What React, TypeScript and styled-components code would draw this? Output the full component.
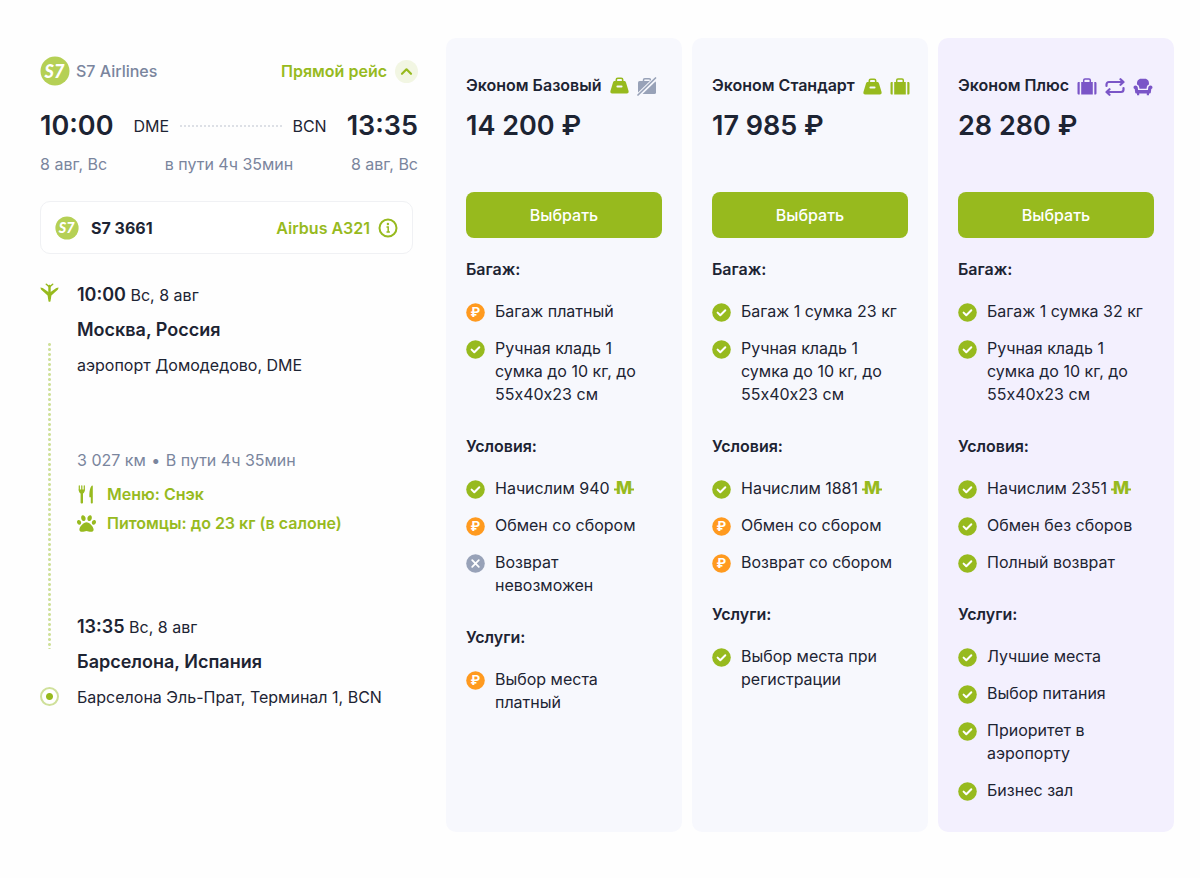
import React from "react";
import styled, { createGlobalStyle } from "styled-components";
import { FaPaw } from "react-icons/fa";

const color = {
  green: "#97ba1e",
  ink: "#1d2433",
  muted: "#7a859d",
  orange: "#ff9a1f",
  violet: "#7a55c7",
  grey: "#98a2b8",
};

const GlobalStyle = createGlobalStyle`
  *, *::before, *::after { box-sizing: border-box; }
  body {
    margin: 0;
    background: #fefefe;
    color: ${color.ink};
    font-family: Inter, "Liberation Sans", sans-serif;
    font-size: 16px;
    line-height: 24px;
  }
  h2, h3, p, ul { margin: 0; padding: 0; font-size: inherit; }
  button { font: inherit; border: 0; cursor: pointer; }
  svg { display: block; flex: none; }
`;

const Page = styled.main`
  display: grid;
  grid-template-columns: 378fr 728fr;
  gap: 28px;
  padding: 38px 26px 46px 40px;
`;

const Flight = styled.section`
  padding-top: 18px;
`;

const Row = styled.div<{ $top?: number }>`
  display: flex;
  align-items: center;
  justify-content: space-between;
  margin-top: ${(p) => p.$top ?? 0}px;
`;

const Airline = styled.div`
  display: flex;
  align-items: center;
  gap: 6px;
  height: 30px;
  color: ${color.muted};
  font-weight: 500;
`;

const TextButton = styled.button`
  display: flex;
  align-items: center;
  gap: 8px;
  padding: 0;
  background: none;
  color: ${color.green};
  font-weight: 600;
`;

const Toggle = styled.span`
  display: grid;
  place-items: center;
  width: 23px;
  height: 23px;
  border-radius: 50%;
  background: #f2f6e3;
`;

const Route = styled.div`
  display: flex;
  align-items: center;
  margin-top: 22px;
`;

const Clock = styled.span`
  font-size: 27px;
  line-height: 36px;
  font-weight: 600;
`;

const Codes = styled.div`
  display: flex;
  flex: 1;
  align-items: center;
  gap: 10px;
  margin: 0 20px;
`;

const Dots = styled.span`
  flex: 1;
  height: 2px;
  background: radial-gradient(circle at center, #dde0e6 0 1px, transparent 1px) 0 0 / 4px 2px;
`;

const Muted = styled.p`
  color: ${color.muted};
`;

const Bullet = styled.span`
  margin: 0 1px;
`;

const FlightCard = styled.div`
  display: flex;
  align-items: center;
  justify-content: space-between;
  height: 53px;
  margin: 25px 5px 29px 0;
  padding: 0 14px;
  border: 1px solid #f0f1f4;
  border-radius: 10px;
  background: #fff;
`;

const FlightNumber = styled.div`
  display: flex;
  align-items: center;
  gap: 12px;
  font-weight: 700;
`;

const Timeline = styled.div`
  display: grid;
  grid-template-columns: 19px 1fr;
  gap: 18px;
`;

const Rail = styled.div`
  display: flex;
  flex-direction: column;
  align-items: center;
  padding-bottom: 3px;
`;

const RailDots = styled.span`
  flex: 1;
  width: 3px;
  margin: 40px 0 38px;
  background: radial-gradient(circle at center, #cfe09a 0 1px, transparent 2px) 0 0 / 3px 5px;
`;

const Ring = styled.span`
  width: 19px;
  height: 19px;
  border: 2px solid #cfe09a;
  border-radius: 50%;
  background: radial-gradient(circle at center, ${color.green} 0 3px, #fff 4px);
`;

const Stop = styled.div`
  display: grid;
  gap: 11px;
`;

const StopTime = styled.p`
  strong { font-size: 18px; font-weight: 600; }
`;

const City = styled.h2`
  font-size: 18px;
  font-weight: 600;
`;

const Details = styled.div`
  display: grid;
  margin: 71px 0 80px;
`;

const Perk = styled.p<{ $top: number }>`
  display: grid;
  grid-template-columns: 19px 1fr;
  gap: 11px;
  align-items: center;
  margin-top: ${(p) => p.$top}px;
  color: ${color.green};
  font-weight: 600;
`;

const Tariffs = styled.section`
  display: grid;
  grid-template-columns: repeat(3, minmax(0, 1fr));
  gap: 10px;
`;

const TariffCard = styled.article<{ $accent?: boolean }>`
  padding: 35px 20px 30px;
  border-radius: 10px;
  background: ${(p) => (p.$accent ? "#f3f0fe" : "#f7f8fd")};
  line-height: 23px;
`;

const TariffHead = styled.div`
  display: flex;
  align-items: center;
  gap: 8px;
  height: 24px;
  white-space: nowrap;
`;

const TariffName = styled.h2`
  font-weight: 600;
`;

const Badges = styled.div`
  display: flex;
  gap: 8px;
  padding-top: 3px;
`;

const Price = styled.p`
  margin: 11px 0 48px;
  font-size: 27px;
  line-height: 36px;
  font-weight: 600;
`;

const SelectButton = styled.button`
  display: block;
  width: 100%;
  height: 46px;
  border-radius: 8px;
  background: ${color.green};
  color: #fff;
  font-weight: 500;
`;

const Group = styled.section<{ $first?: boolean }>`
  margin-top: ${(p) => (p.$first ? 20 : 29)}px;
`;

const GroupTitle = styled.h3`
  margin-bottom: 19px;
  font-weight: 600;
`;

const Features = styled.ul`
  display: grid;
  gap: 14px;
  padding-right: 8px;
  list-style: none;
`;

const Feature = styled.li`
  display: grid;
  grid-template-columns: 19px 1fr;
  gap: 10px;

  > svg { margin-top: 3px; }
`;

const Miles = styled.span`
  display: flex;
  align-items: center;
  gap: 4px;
`;

const S7Logo = ({ size }: { size: number }) => (
  <svg width={size} height={size} viewBox="0 0 30 30" role="img" aria-label="S7">
    <circle cx="15" cy="15" r="14.5" fill="#b5d055" />
    <text x="14.5" y="21.5" textAnchor="middle" fill="#fff" fontFamily="Lato, sans-serif" fontSize="18" fontWeight="900" fontStyle="italic">
      S7
    </text>
  </svg>
);

const PlaneIcon = () => (
  <svg width="19" height="19" viewBox="0 0 19 19">
    <g fill="none" stroke={color.green} strokeLinecap="round" strokeLinejoin="round">
      <path d="M9.500 3v12" strokeWidth="2.400" />
      <path d="M6.300 1.200 9.500 4l3.200-2.800" strokeWidth="1.500" />
    </g>
    <path d="M.4 4.600 2.700 4.900 9.500 9.700 16.300 4.900 18.600 4.600 18 6.400 11.400 12.600 10.500 18.200C10.300 19 8.700 19 8.500 18.200L7.600 12.600 1 6.400z" fill={color.green} />
  </svg>
);

const CutleryIcon = () => (
  <svg width="19" height="19" viewBox="0 0 19 19">
    <path d="M2.300.8V5M4.800.8V5M7.300.8V5" stroke={color.green} strokeWidth="1.200" strokeLinecap="round" />
    <path d="M1.700 4.500h6.200c0 2.200-.8 3.400-1.900 4v9.200c0 1-2.400 1-2.400 0V8.500c-1.100-.6-1.900-1.800-1.900-4z" fill={color.green} />
    <path d="M15.800 1.200v16.500c0 1-2 1-2 0v-5.500h-1.400C12.200 7 13 1.800 15 .5c.5-.2.8.1.8.7z" fill={color.green} />
  </svg>
);

const InfoIcon = () => (
  <svg width="20" height="20" viewBox="0 0 20 20" fill="none" stroke={color.green} strokeWidth="2">
    <circle cx="10" cy="10" r="8.500" />
    <path d="M8.500 9h1.700v5M8.500 14h3.400" strokeWidth="1.500" />
    <circle cx="9.900" cy="6" r="1.200" fill={color.green} stroke="none" />
  </svg>
);

const BagIcon = () => (
  <svg width="19" height="17" viewBox="0 0 19 17">
    <path d="M6.300 5V2.800c0-1 .6-1.600 1.500-1.600h3.400c.9 0 1.500.6 1.500 1.600V5" fill="none" stroke={color.green} strokeWidth="1.600" />
    <path
      fillRule="evenodd"
      fill={color.green}
      d="M5 4h9c1 0 1.600.5 2 1.400l2.500 8.400c.5 1.700-.3 2.700-1.700 2.700H2.200C.8 16.500 0 15.500.5 13.800L3 5.400C3.400 4.500 4 4 5 4zm2.400 4.500c-1.300 0-1.300 2 0 2h4.200c1.300 0 1.300-2 0-2z"
    />
  </svg>
);

const SuitcaseIcon = ({ tone }: { tone: string }) => (
  <svg width="20" height="17" viewBox="0 0 20 17" fill={tone}>
    <path d="M6.700 4.500V2.300c0-.8.5-1.300 1.300-1.300h4c.8 0 1.300.5 1.300 1.300v2.200" fill="none" stroke={tone} strokeWidth="1.500" />
    <path d="M4.200 4h11.600v12.500H4.200z" />
    <path d="M2.700 4v12.500h-.9c-.8 0-1.300-.5-1.300-1.300v-9.900C.5 4.500 1 4 1.800 4zM17.300 4v12.500h.9c.8 0 1.300-.5 1.300-1.300v-9.900c0-.8-.5-1.300-1.300-1.300z" />
  </svg>
);

const NoLuggageIcon = () => (
  <svg width="20" height="19" viewBox="0 0 20 19">
    <path d="M6.500 4.500V3c0-.8.5-1.300 1.300-1.300h4.400c.8 0 1.300.5 1.300 1.300v1.500" fill="none" stroke={color.grey} strokeWidth="1.500" />
    <rect x="1" y="4" width="18" height="13" rx="1.600" fill={color.grey} />
    <path d="M1 18.500 19 1" stroke="#f7f8fd" strokeWidth="4.200" />
    <path d="M1 18 18.500 1" stroke={color.grey} strokeWidth="1.700" strokeLinecap="round" />
  </svg>
);

const ExchangeIcon = () => (
  <svg width="20" height="18" viewBox="0 0 20 18" fill="none" stroke={color.violet} strokeWidth="2.200" strokeLinecap="round" strokeLinejoin="round">
    <path d="M1.500 8V6.500c0-1.500 1-2.500 2.500-2.500h14M15.500 1.200 18.500 4l-3 2.800" />
    <path d="M18.500 10v1.500c0 1.500-1 2.500-2.500 2.500H2M4.500 11.200 1.500 14l3 2.800" />
  </svg>
);

const SeatIcon = () => (
  <svg width="20" height="18" viewBox="0 0 20 18" fill={color.violet}>
    <path d="M4 6.400C3.700 3 5.500.8 8 .8h4c2.500 0 4.300 2.200 4 5.600-1.400.4-2 1.300-2.200 2.800l-.3 1.500h-7l-.3-1.500C6 7.700 5.400 6.800 4 6.400z" />
    <path d="M.5 9.300c0-1.100.8-1.900 1.900-1.900 1.300 0 2.100.8 2.300 1.900l.4 2.800h9.800l.4-2.800c.2-1.100 1-1.900 2.300-1.900 1.100 0 1.900.8 1.900 1.900 0 .9-.5 1.500-1.200 1.800l-.5 3.300c-.1.700-.7 1.200-1.400 1.200H16v1.600h-2.200v-1.600H6.200v1.600H4v-1.600h-.4c-.7 0-1.300-.5-1.400-1.200l-.5-3.300C1 10.800.5 10.200.5 9.300z" />
  </svg>
);

const MileIcon = () => (
  <svg width="20" height="23" viewBox="0 0 20 23" role="img" aria-label="миль">
    <path d="M0 12.500h4M16 12.500h4" stroke={color.green} strokeWidth="2.200" />
    <text x="10" y="17" textAnchor="middle" fill={color.green} fontFamily="Inter, sans-serif" fontSize="17" fontWeight="800">
      M
    </text>
  </svg>
);

type Status = "yes" | "paid" | "no";

const statusFill: Record<Status, string> = {
  yes: color.green,
  paid: color.orange,
  no: color.grey,
};

const StatusIcon = ({ status }: { status: Status }) => (
  <svg width="19" height="19" viewBox="0 0 19 19" aria-hidden="true">
    <circle cx="9.500" cy="9.500" r="9.300" fill={statusFill[status]} />
    {status === "yes" && (
      <path d="m5.600 9.600 2.700 2.700 5-5" fill="none" stroke="#fff" strokeWidth="2" strokeLinecap="round" strokeLinejoin="round" />
    )}
    {status === "no" && <path d="m6.200 6.200 6.600 6.600m0-6.600-6.600 6.600" stroke="#fff" strokeWidth="1.800" strokeLinecap="round" />}
    {status === "paid" && (
      <text x="9.300" y="14" textAnchor="middle" fill="#fff" fontFamily="Inter, sans-serif" fontSize="13" fontWeight="700">
        ₽
      </text>
    )}
  </svg>
);

type Item = { status: Status; text: string; miles?: boolean };
type Tariff = {
  name: string;
  price: string;
  accent?: boolean;
  badges: React.ReactNode;
  groups: { title: string; items: Item[] }[];
};

const yes = (text: string, miles?: boolean): Item => ({ status: "yes", text, miles });
const paid = (text: string): Item => ({ status: "paid", text });
const no = (text: string): Item => ({ status: "no", text });

const cabinBag = yes("Ручная кладь 1 сумка до 10 кг, до 55х40х23 см");

const tariffs: Tariff[] = [
  {
    name: "Эконом Базовый",
    price: "14 200 ₽",
    badges: (
      <>
        <BagIcon />
        <NoLuggageIcon />
      </>
    ),
    groups: [
      { title: "Багаж:", items: [paid("Багаж платный"), cabinBag] },
      { title: "Условия:", items: [yes("Начислим 940", true), paid("Обмен со сбором"), no("Возврат невозможен")] },
      { title: "Услуги:", items: [paid("Выбор места платный")] },
    ],
  },
  {
    name: "Эконом Стандарт",
    price: "17 985 ₽",
    badges: (
      <>
        <BagIcon />
        <SuitcaseIcon tone={color.green} />
      </>
    ),
    groups: [
      { title: "Багаж:", items: [yes("Багаж 1 сумка 23 кг"), cabinBag] },
      { title: "Условия:", items: [yes("Начислим 1881", true), paid("Обмен со сбором"), paid("Возврат со сбором")] },
      { title: "Услуги:", items: [yes("Выбор места при регистрации")] },
    ],
  },
  {
    name: "Эконом Плюс",
    price: "28 280 ₽",
    accent: true,
    badges: (
      <>
        <SuitcaseIcon tone={color.violet} />
        <ExchangeIcon />
        <SeatIcon />
      </>
    ),
    groups: [
      { title: "Багаж:", items: [yes("Багаж 1 сумка 32 кг"), cabinBag] },
      { title: "Условия:", items: [yes("Начислим 2351", true), yes("Обмен без сборов"), yes("Полный возврат")] },
      {
        title: "Услуги:",
        items: [yes("Лучшие места"), yes("Выбор питания"), yes("Приоритет в аэропорту"), yes("Бизнес зал")],
      },
    ],
  },
];

export default function App() {
  return (
    <>
      <GlobalStyle />
      <Page>
        <Flight>
          <Row>
            <Airline>
              <S7Logo size={30} />
              S7 Airlines
            </Airline>
            <TextButton type="button" aria-expanded="true">
              Прямой рейс
              <Toggle>
                <svg width="13" height="13" viewBox="0 0 13 13" fill="none" stroke={color.green} strokeWidth="2.200" strokeLinecap="round" strokeLinejoin="round">
                  <path d="m2 8.800 4.500-4.500L11 8.800" />
                </svg>
              </Toggle>
            </TextButton>
          </Row>
          <Route>
            <Clock>10:00</Clock>
            <Codes>
              <span>DME</span>
              <Dots />
              <span>BCN</span>
            </Codes>
            <Clock>13:35</Clock>
          </Route>
          <Row $top={8}>
            <Muted>8 авг, Вс</Muted>
            <Muted>в пути 4ч 35мин</Muted>
            <Muted>8 авг, Вс</Muted>
          </Row>

          <FlightCard>
            <FlightNumber>
              <S7Logo size={24} />
              S7 3661
            </FlightNumber>
            <TextButton type="button">
              Airbus A321
              <InfoIcon />
            </TextButton>
          </FlightCard>

          <Timeline>
            <Rail>
              <PlaneIcon />
              <RailDots />
              <Ring />
            </Rail>
            <div>
              <Stop>
                <StopTime>
                  <strong>10:00</strong> Вс, 8 авг
                </StopTime>
                <City>Москва, Россия</City>
                <p>аэропорт Домодедово, DME</p>
              </Stop>
              <Details>
                <Muted>
                  3 027 км <Bullet>•</Bullet> В пути 4ч 35мин
                </Muted>
                <Perk $top={10}>
                  <CutleryIcon />
                  Меню: Снэк
                </Perk>
                <Perk $top={5}>
                  <FaPaw size={19} />
                  Питомцы: до 23 кг (в салоне)
                </Perk>
              </Details>
              <Stop>
                <StopTime>
                  <strong>13:35</strong> Вс, 8 авг
                </StopTime>
                <City>Барселона, Испания</City>
                <p>Барселона Эль-Прат, Терминал 1, BCN</p>
              </Stop>
            </div>
          </Timeline>
        </Flight>

        <Tariffs>
          {tariffs.map((tariff) => (
            <TariffCard key={tariff.name} $accent={tariff.accent}>
              <TariffHead>
                <TariffName>{tariff.name}</TariffName>
                <Badges>{tariff.badges}</Badges>
              </TariffHead>
              <Price>{tariff.price}</Price>
              <SelectButton type="button">Выбрать</SelectButton>
              {tariff.groups.map((group, index) => (
                <Group key={group.title} $first={index === 0}>
                  <GroupTitle>{group.title}</GroupTitle>
                  <Features>
                    {group.items.map((item) => (
                      <Feature key={item.text}>
                        <StatusIcon status={item.status} />
                        {item.miles ? (
                          <Miles>
                            {item.text}
                            <MileIcon />
                          </Miles>
                        ) : (
                          <span>{item.text}</span>
                        )}
                      </Feature>
                    ))}
                  </Features>
                </Group>
              ))}
            </TariffCard>
          ))}
        </Tariffs>
      </Page>
    </>
  );
}
